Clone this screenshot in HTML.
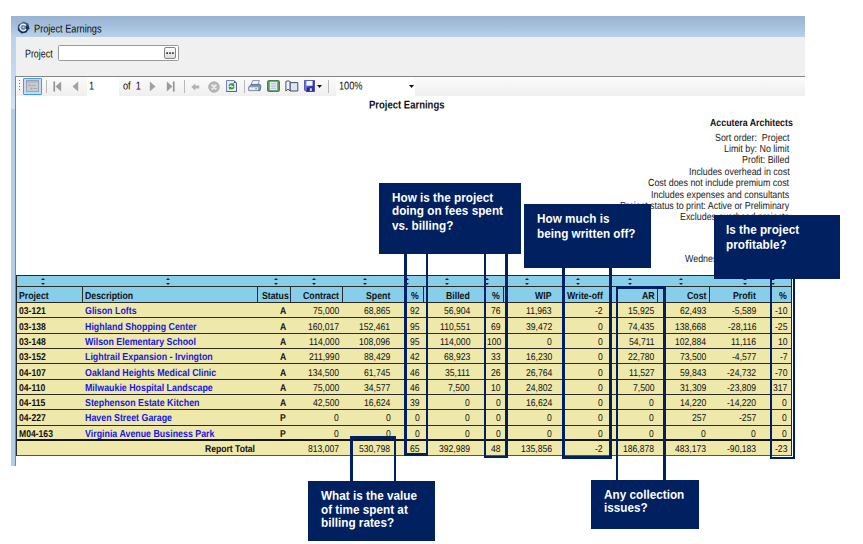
<!DOCTYPE html>
<html><head><meta charset="utf-8"><title>Project Earnings</title>
<style>
html,body{margin:0;padding:0;background:#fff;}
body{width:863px;height:544px;position:relative;overflow:hidden;font-family:"Liberation Sans",sans-serif;}
div{position:absolute;box-sizing:border-box;}
.t{font-size:8.6px;line-height:12px;white-space:nowrap;color:#111;transform:scaleY(1.15) rotate(0.03deg);transform-origin:50% 9.3px;}
.b{font-weight:bold;}
.bl{color:#1616e6;font-size:8.85px;}
.hd{font-size:8.75px;}
.h{font-size:8.9px;color:#222;}
.tb{}
.hl{height:1px;background:#2a2a22;}
.vl{width:1px;background:#2a2a22;}
.sa{width:0;height:0;border-left:2.5px solid transparent;border-right:2.5px solid transparent;border-bottom:2.6px solid #1a1a1a;}
.sd{width:0;height:0;border-left:2.5px solid transparent;border-right:2.5px solid transparent;border-top:2.6px solid #1a1a1a;}
.nb{background:#002060;}
.nl{background:#002060;}
.nt{font-size:11.75px;transform:scale(1,1.07) rotate(0.03deg);transform-origin:0 0;line-height:14px;font-weight:bold;color:#fff;white-space:nowrap;}
.ui{font-size:9.8px;line-height:12px;color:#0c0c0c;white-space:nowrap;transform:scale(0.94,1.16) rotate(0.03deg);transform-origin:0 0;}
.sep{width:1px;background:#b8b8b8;top:80px;height:13px;}
</style></head><body>
<!-- window chrome -->
<div style="left:11px;top:16px;width:794px;height:21px;background:linear-gradient(#99b3d3,#a4bedc 45%,#b9d1ea)"></div>
<div style="left:11px;top:37px;width:5px;height:429.4px;background:linear-gradient(#b9d1ea,#d2e1f3 72.5px,#b4ceea 72.5px,#b4ceea)"></div>
<div style="left:15.6px;top:37px;width:789.4px;height:39.6px;background:#f0f0f0"></div>
<div style="left:15.6px;top:76px;width:789.4px;height:1px;background:#858585"></div>
<div style="left:16.6px;top:77px;width:788.4px;height:19.2px;background:linear-gradient(#fbfbfb,#efefef)"></div>
<div style="left:15.4px;top:76px;width:1.1px;height:390.4px;background:#7f8792"></div>
<!-- title -->
<svg style="position:absolute;left:17.4px;top:21.4px" width="13" height="13" viewBox="0 0 13 13"><defs><linearGradient id="ig" x1="0" y1="0" x2="0.25" y2="1"><stop offset="0" stop-color="#5a6c92"/><stop offset="0.5" stop-color="#3a4f7a"/><stop offset="0.55" stop-color="#123a64"/><stop offset="1" stop-color="#0a2d52"/></linearGradient></defs><path d="M6.6 0.4 L11.2 2.6 L12.4 7.2 L9.4 11.6 L4.6 12.6 L0.8 9.2 L1 4 Z" fill="url(#ig)"/><circle cx="6.3" cy="6.4" r="2.6" fill="#7f8dab"/><path d="M8.9 4.5 A3.3 3.3 0 1 0 9.1 8.2" fill="none" stroke="#f4f6fa" stroke-width="1.35"/><circle cx="6.5" cy="6.3" r="0.8" fill="#c9d0de"/></svg>
<div class="ui" style="left:33.6px;top:21.5px;font-size:9.8px;transform:scale(0.94,1.16) rotate(0.03deg);color:#0c0c0c">Project Earnings</div>
<!-- project field -->
<div class="ui" style="left:25.4px;top:46.8px;font-size:9.8px;transform:scale(0.905,1.16) rotate(0.03deg)">Project</div>
<div style="left:58.4px;top:45.4px;width:120.2px;height:16px;background:#fff;border:1px solid #999;border-radius:1.5px"></div>
<div style="left:164.4px;top:47.4px;width:12px;height:12px;background:linear-gradient(#fdfdfd,#dcdcdc);border:1px solid #858585;border-radius:2px"></div>
<svg style="position:absolute;left:165.4px;top:51.4px" width="10" height="4" viewBox="0 0 10 4"><circle cx="2.1" cy="2.1" r="0.95" fill="#111"/><circle cx="5" cy="2.1" r="0.95" fill="#111"/><circle cx="7.9" cy="2.1" r="0.95" fill="#111"/></svg>
<!-- toolbar -->
<div style="left:18.8px;top:80px;width:1px;height:1px;background:#777"></div>
<div style="left:18.8px;top:83px;width:1px;height:1px;background:#777"></div>
<div style="left:18.8px;top:86px;width:1px;height:1px;background:#777"></div>
<div style="left:18.8px;top:89px;width:1px;height:1px;background:#777"></div>
<div style="left:23.4px;top:77.8px;width:18.8px;height:16.8px;background:#c4ddf6;border:1px solid #3d9bf5;border-radius:1px"></div>
<svg style="position:absolute;left:26.2px;top:80px" width="13" height="12" viewBox="0 0 13 12"><rect x="0.5" y="0.5" width="12" height="11" fill="#c9ccd2" stroke="#9da1a8"/><rect x="1" y="1" width="11" height="1.8" fill="#b3b6bc"/><rect x="2.4" y="4.4" width="1.8" height="1.8" fill="#a3a6ac"/><rect x="5" y="4.9" width="5" height="0.9" fill="#a3a6ac"/><rect x="4.4" y="7.6" width="1.8" height="1.8" fill="#a3a6ac"/><rect x="7" y="8.1" width="4" height="0.9" fill="#a3a6ac"/></svg>
<div class="sep" style="left:45.6px"></div>
<svg style="position:absolute;left:52.8px;top:80.6px" width="9" height="11" viewBox="0 0 9 11"><rect x="0.4" y="0.4" width="1.7" height="10.2" fill="#959595"/><path d="M8.2 0.4 L8.2 10.6 L2.6 5.5 Z" fill="#9c9c9c"/></svg>
<svg style="position:absolute;left:72.4px;top:80.6px" width="7" height="11" viewBox="0 0 7 11"><path d="M6.2 0.4 L6.2 10.6 L0.5 5.5 Z" fill="#a2a2a2"/></svg>
<div style="left:87.4px;top:77.4px;width:31.8px;height:18.4px;background:#fff"></div>
<div class="ui" style="left:88.9px;top:79.1px">1</div>
<div class="ui" style="left:122.8px;top:79.1px">of&nbsp;&nbsp;1</div>
<svg style="position:absolute;left:148.6px;top:80.6px" width="7" height="11" viewBox="0 0 7 11"><path d="M0.8 0.4 L0.8 10.6 L6.5 5.5 Z" fill="#a2a2a2"/></svg>
<svg style="position:absolute;left:165.8px;top:80.6px" width="9" height="11" viewBox="0 0 9 11"><rect x="6.9" y="0.4" width="1.7" height="10.2" fill="#959595"/><path d="M0.8 0.4 L0.8 10.6 L6.4 5.5 Z" fill="#9c9c9c"/></svg>
<div class="sep" style="left:184.2px"></div>
<svg style="position:absolute;left:190.6px;top:82.6px" width="9" height="8" viewBox="0 0 9 8"><path d="M0.4 4 L4.2 0.5 L4.2 2.5 L8.2 2.5 L8.2 5.5 L4.2 5.5 L4.2 7.5 Z" fill="#b2b2b2"/></svg>
<svg style="position:absolute;left:207.5px;top:80.9px" width="12" height="12" viewBox="0 0 12 12"><circle cx="6" cy="6" r="5.6" fill="#b9b9b9"/><circle cx="6" cy="6" r="5.1" fill="none" stroke="#a8a8a8" stroke-width="0.8"/><path d="M4.3 4.3 L7.7 7.7 M7.7 4.3 L4.3 7.7" stroke="#ececec" stroke-width="2" stroke-linecap="round"/></svg>
<svg style="position:absolute;left:226.2px;top:80.2px" width="11" height="12" viewBox="0 0 11 12"><path d="M0.5 0.5 L8 0.5 L10.5 3 L10.5 11.5 L0.5 11.5 Z" fill="#e3ecfa" stroke="#6f86b2"/><path d="M10.5 3 L10.5 11.5 L0.5 11.5" fill="none" stroke="#4f648e" stroke-width="1"/><path d="M8 0.5 L8 3 L10.5 3 Z" fill="#3f5380"/><g fill="#3d9a1f"><path d="M2.5 6.1 C2.6 3.6 5 2.6 6.7 3.6 L7.5 2.5 L8.5 5.9 L5 5.7 L5.8 4.8 C5 4.4 4.1 4.9 4 6.1 Z"/><path d="M8.5 6.5 C8.4 9 6 10 4.3 9 L3.5 10.1 L2.5 6.7 L6 6.9 L5.2 7.8 C6 8.2 6.9 7.7 7 6.5 Z"/></g></svg>
<div class="sep" style="left:244.2px"></div>
<svg style="position:absolute;left:248.2px;top:80.2px" width="14" height="12" viewBox="0 0 14 12"><path d="M4.6 0.6 L11.4 0.6 L9.8 5 L3 5 Z" fill="#f6f8fb" stroke="#6a7d9a" stroke-width="0.8"/><path d="M3.2 4.4 L12 4.4 L13 6 L12 10.6 L0.8 10.6 L0.8 7 Z" fill="#8496b8" stroke="#56688c" stroke-width="0.9"/><path d="M1.2 7.2 L10.4 7.2 L10 10.2 L1.2 10.2 Z" fill="#e9edf4"/><rect x="7.4" y="8.2" width="1.4" height="1.2" fill="#4f9a3a"/></svg>
<svg style="position:absolute;left:266.8px;top:80px" width="13" height="12" viewBox="0 0 13 12"><rect x="0.6" y="0.6" width="11.8" height="10.8" rx="1" fill="#5e9d58" stroke="#3b7a3a"/><rect x="2.6" y="1.8" width="7.8" height="8.4" fill="#eef3fb" stroke="#7d93b8" stroke-width="0.6"/><path d="M3.6 3.6 H9.4 M3.6 5.2 H9.4 M3.6 6.8 H9.4 M3.6 8.4 H9.4" stroke="#9db0d0" stroke-width="0.7"/></svg>
<svg style="position:absolute;left:284.6px;top:80.4px" width="14" height="12" viewBox="0 0 14 12"><path d="M0.9 1.4 Q3.2 0.2 5.2 1.6 L5.2 11 L3 9.2 L0.9 11 Z" fill="#f1f5fb" stroke="#454f66" stroke-width="1"/><path d="M5.2 2.6 L12.8 2.6 L12.8 11 L5.2 11 Z" fill="#dbe6f6" stroke="#454f66" stroke-width="1"/></svg>
<svg style="position:absolute;left:303.8px;top:80.4px" width="11" height="12" viewBox="0 0 11 12"><defs><linearGradient id="sg" x1="0" y1="0" x2="1" y2="0"><stop offset="0" stop-color="#7d80dc"/><stop offset="0.6" stop-color="#3f42c4"/><stop offset="1" stop-color="#2e30a8"/></linearGradient></defs><path d="M0.5 0.5 H10.5 V11.5 H2 L0.5 10 Z" fill="url(#sg)" stroke="#3a3cae" stroke-width="0.8"/><rect x="2.4" y="0.9" width="6.2" height="4.8" fill="#f4f6fb"/><rect x="2.8" y="7.6" width="5.6" height="3.8" fill="#23256e"/><rect x="5.8" y="8.2" width="2" height="2.8" fill="#d6d8ee"/></svg>
<svg style="position:absolute;left:317px;top:85.2px" width="5" height="3" viewBox="0 0 5 3"><path d="M0 0 H5 L2.5 3 Z" fill="#111"/></svg>
<div class="sep" style="left:328.2px"></div>
<div style="left:336.4px;top:77.4px;width:78.8px;height:18.4px;background:#fff"></div>
<div class="ui" style="left:339px;top:79.3px">100%</div>
<svg style="position:absolute;left:408.6px;top:85.4px" width="5" height="3" viewBox="0 0 5 3"><path d="M0 0 H5 L2.5 3 Z" fill="#111"/></svg>
<!-- report -->
<div class="t b" style="left:368.8px;top:98.3px;font-size:9.8px;transform:scale(0.97,1.16) rotate(0.03deg);transform-origin:0 0;color:#111">Project Earnings</div>
<div class="t b" style="right:69.8px;top:116.8px;font-size:8.8px;color:#111">Accutera Architects</div>
<div class="t h" style="right:73.8px;top:131.6px">Sort order:&nbsp; Project</div>
<div class="t h" style="right:73.8px;top:142.8px">Limit by: No limit</div>
<div class="t h" style="right:73.8px;top:154.0px">Profit: Billed</div>
<div class="t h" style="right:73.8px;top:165.8px">Includes overhead in cost</div>
<div class="t h" style="right:73.8px;top:177.2px">Cost does not include premium cost</div>
<div class="t h" style="right:73.8px;top:188.8px">Includes expenses and consultants</div>
<div class="t h" style="right:73.8px;top:200.0px">Project status to print: Active or Preliminary</div>
<div class="t h" style="right:73.8px;top:211.2px">Excludes overhead projects</div>
<div class="t h" style="right:73.8px;top:253.4px">Wednesday, July 01, 2009</div>
<div class="tb" style="left:16.7px;top:275px;width:774.5999999999999px;height:27.5px;background:#87ceeb"></div>
<div class="tb" style="left:16.7px;top:302.5px;width:774.5999999999999px;height:153.5px;background:#eee8aa"></div>
<div class="hl" style="left:16.7px;top:275px;width:774.5999999999999px"></div>
<div class="hl" style="left:16.7px;top:286px;width:774.5999999999999px"></div>
<div class="hl" style="left:16.7px;top:302px;width:774.5999999999999px"></div>
<div class="hl" style="left:16.7px;top:317px;width:774.5999999999999px"></div>
<div class="hl" style="left:16.7px;top:333px;width:774.5999999999999px"></div>
<div class="hl" style="left:16.7px;top:348px;width:774.5999999999999px"></div>
<div class="hl" style="left:16.7px;top:363px;width:774.5999999999999px"></div>
<div class="hl" style="left:16.7px;top:379px;width:774.5999999999999px"></div>
<div class="hl" style="left:16.7px;top:394px;width:774.5999999999999px"></div>
<div class="hl" style="left:16.7px;top:409px;width:774.5999999999999px"></div>
<div class="hl" style="left:16.7px;top:425px;width:774.5999999999999px"></div>
<div class="hl" style="left:16.7px;top:439px;width:774.5999999999999px;height:2px;background:#15150f"></div>
<div class="hl" style="left:16.7px;top:455px;width:774.5999999999999px;background:#55554a"></div>
<div class="vl" style="left:16.2px;top:275px;height:181px"></div>
<div class="vl" style="left:790.5999999999999px;top:275px;height:181px"></div>
<div class="vl" style="left:81.7px;top:286px;height:16.5px"></div>
<div class="vl" style="left:257.1px;top:286px;height:16.5px"></div>
<div class="vl" style="left:290.1px;top:286px;height:16.5px"></div>
<div class="vl" style="left:342.0px;top:286px;height:16.5px"></div>
<div class="vl" style="left:404.5px;top:286px;height:16.5px"></div>
<div class="vl" style="left:423.0px;top:286px;height:16.5px"></div>
<div class="vl" style="left:484.7px;top:286px;height:16.5px"></div>
<div class="vl" style="left:503.4px;top:286px;height:16.5px"></div>
<div class="vl" style="left:562.5px;top:286px;height:16.5px"></div>
<div class="vl" style="left:610.5px;top:286px;height:16.5px"></div>
<div class="vl" style="left:656.7px;top:286px;height:16.5px"></div>
<div class="vl" style="left:708.9px;top:286px;height:16.5px"></div>
<div class="vl" style="left:770.5px;top:286px;height:16.5px"></div>
<div class="sa" style="left:40.5px;top:277.6px"></div><div class="sd" style="left:40.5px;top:282.6px"></div>
<div class="sa" style="left:166.0px;top:277.6px"></div><div class="sd" style="left:166.0px;top:282.6px"></div>
<div class="sa" style="left:273.5px;top:277.6px"></div><div class="sd" style="left:273.5px;top:282.6px"></div>
<div class="sa" style="left:312.2px;top:277.6px"></div><div class="sd" style="left:312.2px;top:282.6px"></div>
<div class="sa" style="left:363.0px;top:277.6px"></div><div class="sd" style="left:363.0px;top:282.6px"></div>
<div class="sa" style="left:404.8px;top:277.6px"></div><div class="sd" style="left:404.8px;top:282.6px"></div>
<div class="sa" style="left:444.8px;top:277.6px"></div><div class="sd" style="left:444.8px;top:282.6px"></div>
<div class="sa" style="left:485.2px;top:277.6px"></div><div class="sd" style="left:485.2px;top:282.6px"></div>
<div class="sa" style="left:525.1px;top:277.6px"></div><div class="sd" style="left:525.1px;top:282.6px"></div>
<div class="sa" style="left:576.0px;top:277.6px"></div><div class="sd" style="left:576.0px;top:282.6px"></div>
<div class="sa" style="left:628.0px;top:277.6px"></div><div class="sd" style="left:628.0px;top:282.6px"></div>
<div class="sa" style="left:679.0px;top:277.6px"></div><div class="sd" style="left:679.0px;top:282.6px"></div>
<div class="sa" style="left:743.0px;top:277.6px"></div><div class="sd" style="left:743.0px;top:282.6px"></div>
<div class="sa" style="left:771.3px;top:277.6px"></div><div class="sd" style="left:771.3px;top:282.6px"></div>
<div class="t b hd" style="left:19.1px;top:289.9px">Project</div>
<div class="t b hd" style="left:85.3px;top:289.9px">Description</div>
<div class="t b hd" style="right:574.6px;top:289.9px">Status</div>
<div class="t b hd" style="right:524.2px;top:289.9px">Contract</div>
<div class="t b hd" style="right:473.0px;top:289.9px">Spent</div>
<div class="t b hd" style="right:444.0px;top:289.9px">%</div>
<div class="t b hd" style="right:392.8px;top:289.9px">Billed</div>
<div class="t b hd" style="right:363.2px;top:289.9px">%</div>
<div class="t b hd" style="right:311.0px;top:289.9px">WIP</div>
<div class="t b hd" style="right:260.0px;top:289.9px">Write-off</div>
<div class="t b hd" style="right:208.8px;top:289.9px">AR</div>
<div class="t b hd" style="right:157.0px;top:289.9px">Cost</div>
<div class="t b hd" style="right:106.8px;top:289.9px">Profit</div>
<div class="t b hd" style="right:76.5px;top:289.9px">%</div>
<div class="t b" style="left:19.1px;top:305.2px">03-121</div>
<div class="t b bl" style="left:85.3px;top:305.2px">Glison Lofts</div>
<div class="t b" style="right:577.0px;top:305.2px">A</div>
<div class="t " style="right:524.0px;top:305.2px">75,000</div>
<div class="t " style="right:472.6px;top:305.2px">68,865</div>
<div class="t " style="right:443.0px;top:305.2px">92</div>
<div class="t " style="right:393.0px;top:305.2px">56,904</div>
<div class="t " style="right:362.0px;top:305.2px">76</div>
<div class="t " style="right:311.0px;top:305.2px">11,963</div>
<div class="t " style="right:260.0px;top:305.2px">-2</div>
<div class="t " style="right:208.8px;top:305.2px">15,925</div>
<div class="t " style="right:157.0px;top:305.2px">62,493</div>
<div class="t " style="right:106.8px;top:305.2px">-5,589</div>
<div class="t " style="right:75.8px;top:305.2px">-10</div>
<div class="t b" style="left:19.1px;top:320.6px">03-138</div>
<div class="t b bl" style="left:85.3px;top:320.6px">Highland Shopping Center</div>
<div class="t b" style="right:577.0px;top:320.6px">A</div>
<div class="t " style="right:524.0px;top:320.6px">160,017</div>
<div class="t " style="right:472.6px;top:320.6px">152,461</div>
<div class="t " style="right:443.0px;top:320.6px">95</div>
<div class="t " style="right:393.0px;top:320.6px">110,551</div>
<div class="t " style="right:362.0px;top:320.6px">69</div>
<div class="t " style="right:311.0px;top:320.6px">39,472</div>
<div class="t " style="right:260.0px;top:320.6px">0</div>
<div class="t " style="right:208.8px;top:320.6px">74,435</div>
<div class="t " style="right:157.0px;top:320.6px">138,668</div>
<div class="t " style="right:106.8px;top:320.6px">-28,116</div>
<div class="t " style="right:75.8px;top:320.6px">-25</div>
<div class="t b" style="left:19.1px;top:335.6px">03-148</div>
<div class="t b bl" style="left:85.3px;top:335.6px">Wilson Elementary School</div>
<div class="t b" style="right:577.0px;top:335.6px">A</div>
<div class="t " style="right:524.0px;top:335.6px">114,000</div>
<div class="t " style="right:472.6px;top:335.6px">108,096</div>
<div class="t " style="right:443.0px;top:335.6px">95</div>
<div class="t " style="right:393.0px;top:335.6px">114,000</div>
<div class="t " style="right:362.0px;top:335.6px">100</div>
<div class="t " style="right:311.0px;top:335.6px">0</div>
<div class="t " style="right:260.0px;top:335.6px">0</div>
<div class="t " style="right:208.8px;top:335.6px">54,711</div>
<div class="t " style="right:157.0px;top:335.6px">102,884</div>
<div class="t " style="right:106.8px;top:335.6px">11,116</div>
<div class="t " style="right:75.8px;top:335.6px">10</div>
<div class="t b" style="left:19.1px;top:350.9px">03-152</div>
<div class="t b bl" style="left:85.3px;top:350.9px">Lightrail Expansion - Irvington</div>
<div class="t b" style="right:577.0px;top:350.9px">A</div>
<div class="t " style="right:524.0px;top:350.9px">211,990</div>
<div class="t " style="right:472.6px;top:350.9px">88,429</div>
<div class="t " style="right:443.0px;top:350.9px">42</div>
<div class="t " style="right:393.0px;top:350.9px">68,923</div>
<div class="t " style="right:362.0px;top:350.9px">33</div>
<div class="t " style="right:311.0px;top:350.9px">16,230</div>
<div class="t " style="right:260.0px;top:350.9px">0</div>
<div class="t " style="right:208.8px;top:350.9px">22,780</div>
<div class="t " style="right:157.0px;top:350.9px">73,500</div>
<div class="t " style="right:106.8px;top:350.9px">-4,577</div>
<div class="t " style="right:75.8px;top:350.9px">-7</div>
<div class="t b" style="left:19.1px;top:366.8px">04-107</div>
<div class="t b bl" style="left:85.3px;top:366.8px">Oakland Heights Medical Clinic</div>
<div class="t b" style="right:577.0px;top:366.8px">A</div>
<div class="t " style="right:524.0px;top:366.8px">134,500</div>
<div class="t " style="right:472.6px;top:366.8px">61,745</div>
<div class="t " style="right:443.0px;top:366.8px">46</div>
<div class="t " style="right:393.0px;top:366.8px">35,111</div>
<div class="t " style="right:362.0px;top:366.8px">26</div>
<div class="t " style="right:311.0px;top:366.8px">26,764</div>
<div class="t " style="right:260.0px;top:366.8px">0</div>
<div class="t " style="right:208.8px;top:366.8px">11,527</div>
<div class="t " style="right:157.0px;top:366.8px">59,843</div>
<div class="t " style="right:106.8px;top:366.8px">-24,732</div>
<div class="t " style="right:75.8px;top:366.8px">-70</div>
<div class="t b" style="left:19.1px;top:382.2px">04-110</div>
<div class="t b bl" style="left:85.3px;top:382.2px">Milwaukie Hospital Landscape</div>
<div class="t b" style="right:577.0px;top:382.2px">A</div>
<div class="t " style="right:524.0px;top:382.2px">75,000</div>
<div class="t " style="right:472.6px;top:382.2px">34,577</div>
<div class="t " style="right:443.0px;top:382.2px">46</div>
<div class="t " style="right:393.0px;top:382.2px">7,500</div>
<div class="t " style="right:362.0px;top:382.2px">10</div>
<div class="t " style="right:311.0px;top:382.2px">24,802</div>
<div class="t " style="right:260.0px;top:382.2px">0</div>
<div class="t " style="right:208.8px;top:382.2px">7,500</div>
<div class="t " style="right:157.0px;top:382.2px">31,309</div>
<div class="t " style="right:106.8px;top:382.2px">-23,809</div>
<div class="t " style="right:75.8px;top:382.2px">317</div>
<div class="t b" style="left:19.1px;top:396.9px">04-115</div>
<div class="t b bl" style="left:85.3px;top:396.9px">Stephenson Estate Kitchen</div>
<div class="t b" style="right:577.0px;top:396.9px">A</div>
<div class="t " style="right:524.0px;top:396.9px">42,500</div>
<div class="t " style="right:472.6px;top:396.9px">16,624</div>
<div class="t " style="right:443.0px;top:396.9px">39</div>
<div class="t " style="right:393.0px;top:396.9px">0</div>
<div class="t " style="right:362.0px;top:396.9px">0</div>
<div class="t " style="right:311.0px;top:396.9px">16,624</div>
<div class="t " style="right:260.0px;top:396.9px">0</div>
<div class="t " style="right:208.8px;top:396.9px">0</div>
<div class="t " style="right:157.0px;top:396.9px">14,220</div>
<div class="t " style="right:106.8px;top:396.9px">-14,220</div>
<div class="t " style="right:75.8px;top:396.9px">0</div>
<div class="t b" style="left:19.1px;top:412.4px">04-227</div>
<div class="t b bl" style="left:85.3px;top:412.4px">Haven Street Garage</div>
<div class="t b" style="right:577.0px;top:412.4px">P</div>
<div class="t " style="right:524.0px;top:412.4px">0</div>
<div class="t " style="right:472.6px;top:412.4px">0</div>
<div class="t " style="right:443.0px;top:412.4px">0</div>
<div class="t " style="right:393.0px;top:412.4px">0</div>
<div class="t " style="right:362.0px;top:412.4px">0</div>
<div class="t " style="right:311.0px;top:412.4px">0</div>
<div class="t " style="right:260.0px;top:412.4px">0</div>
<div class="t " style="right:208.8px;top:412.4px">0</div>
<div class="t " style="right:157.0px;top:412.4px">257</div>
<div class="t " style="right:106.8px;top:412.4px">-257</div>
<div class="t " style="right:75.8px;top:412.4px">0</div>
<div class="t b" style="left:19.1px;top:427.8px">M04-163</div>
<div class="t b bl" style="left:85.3px;top:427.8px">Virginia Avenue Business Park</div>
<div class="t b" style="right:577.0px;top:427.8px">P</div>
<div class="t " style="right:524.0px;top:427.8px">0</div>
<div class="t " style="right:472.6px;top:427.8px">0</div>
<div class="t " style="right:443.0px;top:427.8px">0</div>
<div class="t " style="right:393.0px;top:427.8px">0</div>
<div class="t " style="right:362.0px;top:427.8px">0</div>
<div class="t " style="right:311.0px;top:427.8px">0</div>
<div class="t " style="right:260.0px;top:427.8px">0</div>
<div class="t " style="right:208.8px;top:427.8px">0</div>
<div class="t " style="right:157.0px;top:427.8px">0</div>
<div class="t " style="right:106.8px;top:427.8px">0</div>
<div class="t " style="right:75.8px;top:427.8px">0</div>
<div class="t b" style="right:608.2px;top:443.2px">Report Total</div>
<div class="t " style="right:524.0px;top:443.2px">813,007</div>
<div class="t " style="right:472.6px;top:443.2px">530,798</div>
<div class="t " style="right:443.0px;top:443.2px">65</div>
<div class="t " style="right:393.0px;top:443.2px">392,989</div>
<div class="t " style="right:362.0px;top:443.2px">48</div>
<div class="t " style="right:311.0px;top:443.2px">135,856</div>
<div class="t " style="right:260.0px;top:443.2px">-2</div>
<div class="t " style="right:208.8px;top:443.2px">186,878</div>
<div class="t " style="right:157.0px;top:443.2px">483,173</div>
<div class="t " style="right:106.8px;top:443.2px">-90,183</div>
<div class="t " style="right:75.8px;top:443.2px">-23</div>
<div class="nb" style="left:379.1px;top:183px;width:142.1px;height:70.6px"></div>
<div class="nt" style="left:392.3px;top:189.8px">How is the project</div>
<div class="nt" style="left:392.3px;top:203.2px">doing on fees spent</div>
<div class="nt" style="left:392.3px;top:218.1px">vs. billing?</div>
<div class="nl" style="left:404.2px;top:253px;width:2.8px;height:202.6px"></div>
<div class="nl" style="left:425.6px;top:253px;width:2.8px;height:202.6px"></div>
<div class="nl" style="left:404.2px;top:452.8px;width:24.2px;height:2.8px"></div>
<div class="nl" style="left:483.6px;top:253px;width:2.8px;height:205.4px"></div>
<div class="nl" style="left:505.4px;top:253px;width:2.8px;height:205.4px"></div>
<div class="nl" style="left:483.6px;top:455.6px;width:24.6px;height:2.8px"></div>
<div class="nb" style="left:524.4px;top:204.2px;width:126.6px;height:63.8px"></div>
<div class="nt" style="left:537.3px;top:211.2px">How much is</div>
<div class="nt" style="left:537.3px;top:226.1px">being written off?</div>
<div class="nl" style="left:561.8px;top:267px;width:2.8px;height:192.0px"></div>
<div class="nl" style="left:609.4px;top:267px;width:2.8px;height:192.0px"></div>
<div class="nl" style="left:561.8px;top:456.2px;width:50.4px;height:2.8px"></div>
<div class="nb" style="left:713.5px;top:215px;width:126.9px;height:63.5px"></div>
<div class="nt" style="left:726.3px;top:222.1px">Is the project</div>
<div class="nt" style="left:726.3px;top:237.2px">profitable?</div>
<div class="nl" style="left:769.6px;top:278px;width:2.8px;height:181.4px"></div>
<div class="nl" style="left:792.7px;top:278px;width:2.8px;height:181.4px"></div>
<div class="nl" style="left:769.6px;top:456.6px;width:25.9px;height:2.8px"></div>
<div class="nb" style="left:308.2px;top:481px;width:127.0px;height:59.8px"></div>
<div class="nt" style="left:321.4px;top:488.1px">What is the value</div>
<div class="nt" style="left:321.4px;top:502.2px">of time spent at</div>
<div class="nt" style="left:321.4px;top:515.0px">billing rates?</div>
<div class="nl" style="left:350.2px;top:436.4px;width:2.8px;height:45.1px"></div>
<div class="nl" style="left:393.5px;top:436.4px;width:2.8px;height:45.1px"></div>
<div class="nl" style="left:350.2px;top:436.4px;width:46.1px;height:2.8px"></div>
<div class="nb" style="left:591.4px;top:480.4px;width:107.6px;height:48.3px"></div>
<div class="nt" style="left:604.4px;top:487.1px">Any collection</div>
<div class="nt" style="left:604.4px;top:499.6px">issues?</div>
<div class="nl" style="left:615.6px;top:285.8px;width:2.8px;height:195.2px"></div>
<div class="nl" style="left:663.2px;top:285.8px;width:2.8px;height:195.2px"></div>
<div class="nl" style="left:615.6px;top:285.8px;width:50.4px;height:2.8px"></div>
</body></html>
